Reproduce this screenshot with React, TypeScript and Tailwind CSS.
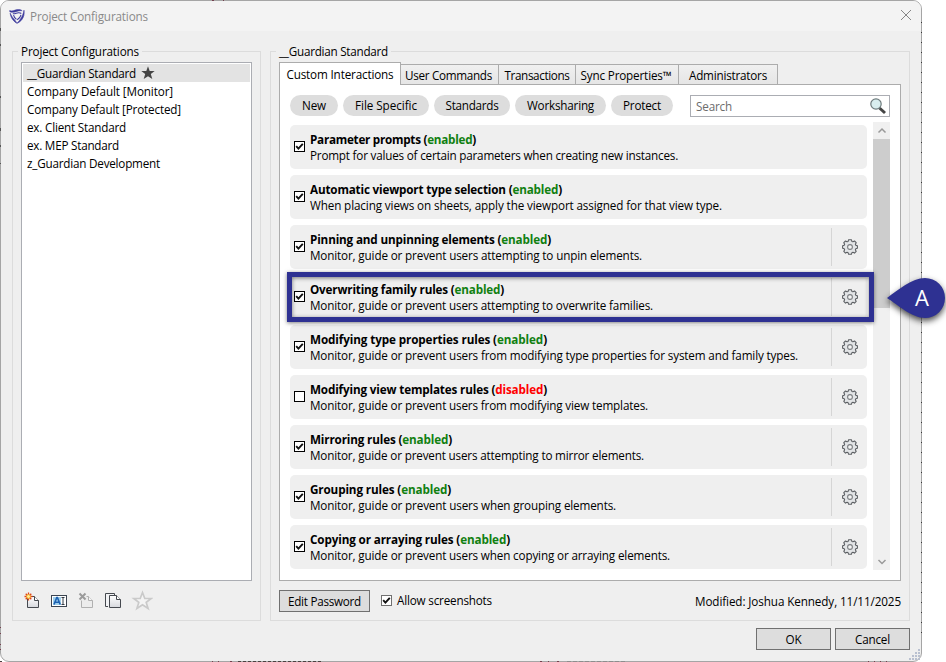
import { useLayoutEffect, useRef, useState } from "react";

// Label that spreads its letters so the text spans `w` pixels.
function Label({ text, w, className = "" }: { text: string; w: number; className?: string }) {
  const ref = useRef<HTMLSpanElement>(null);
  const [spacing, setSpacing] = useState(0);
  useLayoutEffect(() => {
    const el = ref.current;
    if (!el) return;
    el.style.letterSpacing = "0px";
    const s = (w - el.getBoundingClientRect().width) / text.length;
    el.style.letterSpacing = `${s}px`;
    setSpacing(s);
  }, [text, w]);
  return (
    <span ref={ref} className={`inline-block whitespace-pre ${className}`} style={{ letterSpacing: spacing }}>
      {text}
    </span>
  );
}

const configs: [string, number][] = [
  ["__Guardian Standard", 109],
  ["Company Default [Monitor]", 146],
  ["Company Default [Protected]", 154],
  ["ex. Client Standard", 99],
  ["ex. MEP Standard", 92],
  ["z_Guardian Development", 133],
];

const tabs = [
  { text: "User Commands", w: 87, box: "w-[99px] pr-[2px]" },
  { text: "Transactions", w: 65, box: "w-[78px]" },
  { text: "Sync Properties™", w: 91, box: "w-[104px] pr-[2px]" },
  { text: "Administrators", w: 78, box: "w-[100px]" },
];

const filters = [
  { text: "New", w: 24, box: "w-12" },
  { text: "File Specific", w: 62, box: "w-[86px]" },
  { text: "Standards", w: 53, box: "w-[76px]" },
  { text: "Worksharing", w: 67, box: "w-[91px]" },
  { text: "Protect", w: 38, box: "w-[62px]" },
];

const rules = [
  { title: "Parameter prompts", tw: 166, desc: "Prompt for values of certain parameters when creating new instances.", dw: 368, on: true, gear: false },
  { title: "Automatic viewport type selection", tw: 252, desc: "When placing views on sheets, apply the viewport assigned for that view type.", dw: 412, on: true, gear: false },
  { title: "Pinning and unpinning elements", tw: 241, desc: "Monitor, guide or prevent users attempting to unpin elements.", dw: 332, on: true, gear: true },
  { title: "Overwriting family rules", tw: 194, desc: "Monitor, guide or prevent users attempting to overwrite families.", dw: 343, on: true, gear: true },
  { title: "Modifying type properties rules", tw: 237, desc: "Monitor, guide or prevent users from modifying type properties for system and family types.", dw: 488, on: true, gear: true },
  { title: "Modifying view templates rules", tw: 237, desc: "Monitor, guide or prevent users from modifying view templates.", dw: 338, on: false, gear: true },
  { title: "Mirroring rules", tw: 142, desc: "Monitor, guide or prevent users attempting to mirror elements.", dw: 334, on: true, gear: true },
  { title: "Grouping rules", tw: 141, desc: "Monitor, guide or prevent users when grouping elements.", dw: 306, on: true, gear: true },
  { title: "Copying or arraying rules", tw: 200, desc: "Monitor, guide or prevent users when copying or arraying elements.", dw: 360, on: true, gear: true },
];

function RuleTitle({ title, w, on }: { title: string; w: number; on: boolean }) {
  const ref = useRef<HTMLDivElement>(null);
  const state = on ? "enabled" : "disabled";
  useLayoutEffect(() => {
    const el = ref.current;
    if (!el) return;
    el.style.letterSpacing = "0px";
    const n = title.length + state.length + 3;
    el.style.letterSpacing = `${(w - el.getBoundingClientRect().width) / n}px`;
  }, [title, w, state]);
  return (
    <div ref={ref} className="w-max whitespace-pre font-bold">
      {title} (<span className={on ? "text-[#118011]" : "text-[#f00]"}>{state}</span>)
    </div>
  );
}

function Check({ on, soft = false }: { on: boolean; soft?: boolean }) {
  return (
    <span className={`flex size-[11px] shrink-0 border bg-white ${soft ? "border-[#707070]" : "-mt-px border-black"}`}>
      {on && (
        <svg viewBox="0 0 9 9" className="size-[9px]">
          <path d="M1.2 4.2 L3.4 6.6 L7.8 1.8" fill="none" stroke="#111" strokeWidth="1.9" />
        </svg>
      )}
    </span>
  );
}

function Gear() {
  return (
    <svg viewBox="0 0 16 16" className="size-4" fill="none" stroke="#5c5f63" strokeWidth="1.1">
      <path
        d="M6.600.700h2.800l.5 1.700 1 .4 1.600-.8 1.700 1.700-.8 1.600.4 1 1.600.5v2.500l-1.600.5-.4 1 .8 1.600-1.700 1.700-1.600-.8-1 .4-.5 1.600H6.600l-.5-1.600-1-.4-1.600.8-1.700-1.700.8-1.600-.4-1-1.600-.5V6.800l1.600-.5.4-1-.8-1.600L3.500 2l1.600.8 1-.4z"
        fill="#e2e4e6"
        strokeLinejoin="round"
      />
      <circle cx="8" cy="8" r="2.400" fill="#f4f4f4" stroke="#7c7f82" />
    </svg>
  );
}

function Logo() {
  return (
    <svg viewBox="0 0 16 16" className="size-4" fill="none" stroke="#3f3d9e">
      <path d="M.6 2.600c3 1 5-.6 7.600-1 2.200-.3 4 .2 5 1.200-2-.4-4.200.2-6 .900-2.400.8-4.800.900-6.400.100z" fill="#3f3d9e" strokeWidth=".5" />
      <path d="M15 2.200c.6 3.600-.2 6.800-2 9.200-1.400 1.900-3 3.100-5 3.900 1.600-1.500 3-3.300 4.100-5.300 1.400-2.500 2.500-5 2.900-7.800z" fill="#3f3d9e" strokeWidth=".6" />
      <path d="M1.200 5.200c.3 3 1.500 5.400 3.400 7.500 1 1.100 2 1.900 3.200 2.500-.6-1.500-1.600-2.700-2.700-4C3.600 9.500 2.200 7.600 1.200 5.200z" fill="#3f3d9e" strokeWidth=".6" />
      <path d="M3.800 5.700c2.300.300 3.700-.900 5.500-1 1.300-.1 2.300.2 3 .8M12 6.800c-.600 2.200-1.800 3.800-3.800 5M4.500 7.200c.5 1.700 1.500 3 2.900 4.200" strokeWidth="1.100" />
    </svg>
  );
}

function Toolbar() {
  return (
    <div className="mt-[10px] ml-[11px] flex h-5 items-center">
      <svg viewBox="0 0 18 18" className="mr-[8px] size-[18px]">
        <defs>
          <linearGradient id="paper" x2="0" y2="1">
            <stop offset="0" stopColor="#fff" />
            <stop offset="1" stopColor="#d6d8dd" />
          </linearGradient>
        </defs>
        <path d="M3.500 4.500h7l4 4v7h-11z" fill="url(#paper)" stroke="#45494f" />
        <path d="M10.500 4.500v4h4" fill="#fff" stroke="#45494f" />
        <path d="M4.500.5v8M.5 4.500h8M1.700 1.700l5.600 5.600M7.300 1.700L1.700 7.300" stroke="#e0441c" strokeWidth="1.300" />
        <circle cx="4.500" cy="4.500" r="1.900" fill="#fff0a0" stroke="#f3a81e" />
      </svg>
      <svg viewBox="0 0 18 18" className="mr-[9px] size-[18px]">
        <rect x="1.500" y="3.500" width="15" height="11" fill="#fff" stroke="#3b4450" />
        <rect x="3" y="5" width="8" height="8" fill="#9fd0ee" />
        <path d="M4 12.500L6.800 5.500h.6l2.800 7M5 10.300h4" stroke="#1f62b0" strokeWidth="1.600" fill="none" />
        <path d="M11.500 5.500h3M13 5.500v7M11.500 12.500h3" stroke="#333b45" fill="none" />
      </svg>
      <svg viewBox="-1 0 18 18" className="mr-[9px] size-[18px]">
        <path d="M3.500 8.500v7h11v-7l-4-4h-2" fill="#ececec" stroke="#b0b0b0" />
        <path d="M10.500 4.500v4h4" fill="#f6f6f6" stroke="#b0b0b0" />
        <path d="M1.500 1.500l6 6M7.500 1.500l-6 6" stroke="#9b9b9b" strokeWidth="2" />
      </svg>
      <svg viewBox="0 0 18 18" className="mr-[9px] size-[18px]">
        <path d="M4 14.500H1.500v-13h9v2" fill="#f2f3f5" stroke="#45494f" />
        <path d="M5.500 3.500h7l4 4v8h-11z" fill="url(#paper)" stroke="#45494f" />
        <path d="M12.500 3.500v4h4" fill="#fff" stroke="#45494f" />
      </svg>
      <svg viewBox="0 0 22 22" className="size-[22px]">
        <path d="M11.500 2.500l2.300 6h6.400l-5 3.900 1.900 6.100-5.600-3.700-5.600 3.700 1.900-6.100-5-3.900h6.400z" fill="#f4f4f4" stroke="#cacaca" strokeWidth="1.700" />
      </svg>
    </div>
  );
}

export default function App() {
  return (
    <div className="relative h-[662px] w-[946px] overflow-hidden bg-white font-['Open_Sans','Noto_Sans',sans-serif] text-[11.7px] leading-4 text-black">
      <div className="flex h-[662px] w-[922px] flex-col overflow-hidden rounded-[9px] border border-[#a5a5a5] bg-[#efefef]">
        <header className="flex h-[30px] shrink-0 items-center bg-[#f3f3f3] pl-2 text-[#8a8a8a]">
          <Logo />
          <Label text="Project Configurations" w={118} className="ml-[5px] pb-px" />
          <svg viewBox="0 0 12 12" className="mr-[9px] mb-[2px] ml-auto size-3" stroke="#858585">
            <path d="M1 1l10 10M11 1L1 11" />
          </svg>
        </header>

        <div className="flex pt-[20px] pl-[11px]">
          <section className="relative mr-[9px] h-[570px] w-[249px] border border-[#dcdcdc]">
            <div className="absolute -top-[9px] left-[5px] bg-[#efefef] px-[3px]">
              <Label text="Project Configurations" w={118} />
            </div>
            <div className="mt-[10px] ml-2 h-[519px] w-[231px] border border-[#abadb3] bg-white p-px">
              {configs.map(([name, w], i) => (
                <div key={name} className={`flex h-[18px] items-center pl-1 ${i === 0 ? "bg-[#e3e3e3]" : ""}`}>
                  <Label text={name} w={w} />
                  {i === 0 && (
                    <svg viewBox="0 0 14 14" className="ml-[5px] size-[14px]" fill="#444">
                      <path d="M7 .2l1.700 4.700h5L9.800 8.100l1.500 5L7 10.200l-4.300 2.900 1.500-5L.3 4.900h5z" />
                    </svg>
                  )}
                </div>
              ))}
            </div>
            <Toolbar />
          </section>

          <section className="relative h-[570px] w-[640px] border border-[#dcdcdc]">
            <div className="absolute -top-[9px] left-[5px] bg-[#efefef] px-[3px]">
              <Label text="__Guardian Standard" w={109} />
            </div>
            <div className="mt-[10px] ml-2 w-[622px]">
              <div className="flex h-[23px] items-end">
                <div className="z-10 flex h-[23px] w-[122px] items-center justify-center border border-b-0 border-[#acacac] bg-white pb-px">
                  <Label text="Custom Interactions" w={107} />
                </div>
                {tabs.map((t) => (
                  <div key={t.text} className={`-ml-px flex h-[21px] items-center justify-center border border-b-0 border-[#acacac] bg-linear-to-b from-[#f0f0f0] to-[#e5e5e5] pb-px ${t.box}`}>
                    <Label text={t.text} w={t.w} />
                  </div>
                ))}
              </div>
              <div className="relative -mt-px h-[497px] border border-[#acacac] bg-white">
                <div className="absolute -top-px left-0 h-px w-[120px] bg-white" />
                <div className="flex h-8 pt-[10px] pl-[10px]">
                  <div className="flex gap-[5px]">
                    {filters.map((f) => (
                      <div key={f.text} className={`flex h-[21px] items-center justify-center rounded-full bg-[#ddd] pb-px ${f.box}`}>
                        <Label text={f.text} w={f.w} />
                      </div>
                    ))}
                  </div>
                  <div className="ml-[17px] flex h-[22px] w-[200px] items-center justify-between border border-[#abadb3] bg-white pr-[2px] pl-[5px] text-[#6c6c6c]">
                    <Label text="Search" w={36} />
                    <svg viewBox="0 -0.5 18 18" className="size-[18px]">
                      <path d="M10.500 10.500l5.500 5" stroke="#444" strokeWidth="3" />
                      <circle cx="7" cy="6.500" r="5.200" fill="#d9eeef" stroke="#6e7b7d" strokeWidth="1.200" />
                    </svg>
                  </div>
                </div>
                <div className="flex pl-[10px]">
                  <div className="mt-2 flex w-[577px] flex-col gap-[6px]">
                    {rules.map((r) => (
                      <div key={r.title} className="flex h-11 items-center rounded-[5px] bg-[#efefef] pl-1">
                        <Check on={r.on} />
                        <div className="ml-[5px] flex h-8 flex-1 flex-col">
                          <RuleTitle title={r.title} w={r.tw} on={r.on} />
                          <Label text={r.desc} w={r.dw} className="w-max" />
                        </div>
                        {r.gear && (
                          <div className="flex h-[38px] w-9 items-center border-l border-[#d5d5d5] pl-[10px]">
                            <Gear />
                          </div>
                        )}
                      </div>
                    ))}
                  </div>
                  <div className="mt-[5px] ml-[6px] flex h-[448px] w-[17px] shrink-0 flex-col items-center bg-[#f0f0f0]">
                    <svg viewBox="0 0 17 17" className="size-[17px] shrink-0" fill="none" stroke="#999" strokeWidth="1.500">
                      <path d="M5.500 10.500l3.500-3.500 3.500 3.500" />
                    </svg>
                    <div className="h-[169px] w-full bg-[#cdcdcd]" />
                    <svg viewBox="0 0 17 17" className="mt-auto size-[17px] shrink-0" fill="none" stroke="#999" strokeWidth="1.500">
                      <path d="M5.500 7l3.500 3.500 3.500-3.500" />
                    </svg>
                  </div>
                </div>
              </div>
              <div className="mt-[9px] flex h-[22px] items-center">
                <div className="flex h-[22px] w-[91px] items-center justify-center border border-[#707070] bg-[#ddd]">
                  <Label text="Edit Password" w={73} />
                </div>
                <div className="-mt-[2px] ml-[11px] flex items-center gap-[5px]">
                  <Check on soft />
                  <Label text="Allow screenshots" w={95} />
                </div>
                <Label text="Modified: Joshua Kennedy, 11/11/2025" w={206} className="ml-auto" />
              </div>
            </div>
          </section>
        </div>

        <footer className="mt-[7px] flex gap-1 pl-[755px]">
          <div className="flex h-[22px] w-[75px] items-center justify-center border border-[#707070] bg-[#ddd]">
            <Label text="OK" w={16} />
          </div>
          <div className="flex h-[22px] w-[75px] items-center justify-center border border-[#707070] bg-[#ddd]">
            <Label text="Cancel" w={35} />
          </div>
        </footer>
      </div>

      <svg viewBox="0 0 12 12" className="absolute top-[648px] left-[908px] size-3" fill="#b9c0d0">
        {[[9, 0], [6, 3], [9, 3], [3, 6], [6, 6], [9, 6], [0, 9], [3, 9], [6, 9], [9, 9]].map(([x, y]) => (
          <rect key={`${x}-${y}`} x={x + 1} y={y + 1} width="2" height="2" />
        ))}
      </svg>
      <svg viewBox="0 0 946 662" className="pointer-events-none absolute top-0 left-0 h-[662px] w-[946px]" fill="none">
        <path d="M921.500 22V640" stroke="#333" strokeDasharray="1 9" />
        <path d="M0 661.500h2M238 661.500h85" stroke="#4a4040" strokeDasharray="3 2" />
        <path d="M212 661.500h1M218 661.500h1M230 661.500h2M540 661.500h2M548 661.500h1M557 661.500h2M868 661.500h1M874 661.500h1M880 661.500h1M886 661.500h1M212 .5h2M223 .5h1" stroke="#74404e" />
        <path d="M567 661.500h60" stroke="#8d8d8d" strokeDasharray="4 2" />
        <path d="M.5 28v3M.5 44v2M.5 96v2M.5 128v3M.5 145v2M.5 163v1" stroke="#555" />
        <path d="M.5 627v1M.5 633v1M.5 644v1M.5 649v1" stroke="#74404e" />
      </svg>
      <div className="absolute top-[272px] left-[287px] h-[50px] w-[587px] border-[5px] border-[#2e3192] shadow-[0_1px_4px_rgba(0,0,0,0.5),inset_0_1px_4px_rgba(0,0,0,0.5)]" />
      <svg viewBox="0 0 66 60" className="absolute top-[268px] left-[880px] h-[60px] w-[66px] drop-shadow-[0_3px_3px_rgba(0,0,0,0.7)]">
        <path d="M7 30C18 22 32 10 45 10a20 20 0 0 1 0 40C32 50 18 37 7 30z" fill="#2e3192" />
      </svg>
      <span className="absolute top-[285px] left-[915px] text-[22px] leading-6 text-white">A</span>
    </div>
  );
}
